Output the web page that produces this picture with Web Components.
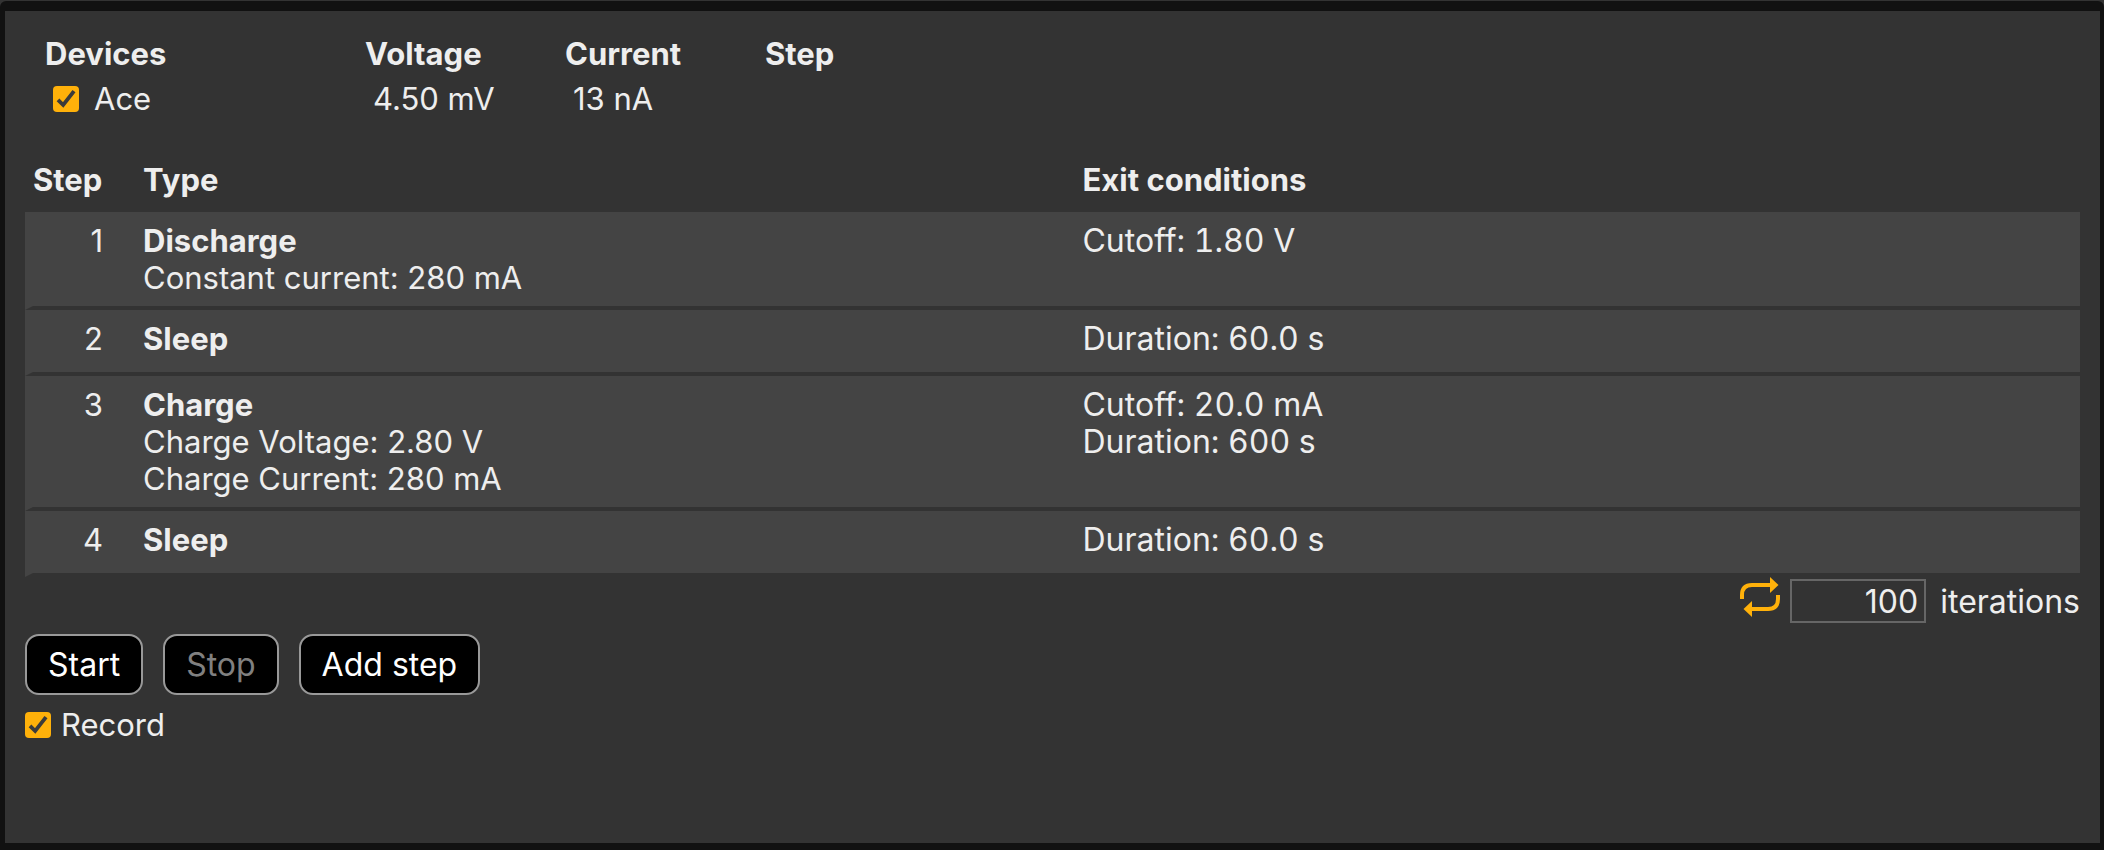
<!DOCTYPE html>
<html lang="en">
<head>
<meta charset="utf-8">
<meta name="viewport" content="width=device-width, initial-scale=1">
<title>Source sequence</title>
<style>
  html, body {
    height: 100%;
    margin: 0;
  }
  body {
    background: #333;
    color: #eee;
    font: 31px/37px Inter, "Liberation Sans", sans-serif;
    --control-size: 32px;
  }
</style>
</head>
<body>
<sequence-panel>
  <device-list slot="devices"></device-list>
  <step-table slot="steps"></step-table>
  <loop-count slot="loop" value="100"></loop-count>
  <push-button slot="actions">Start</push-button>
  <push-button slot="actions" disabled>Stop</push-button>
  <push-button slot="actions">Add step</push-button>
  <check-box slot="record" checked>Record</check-box>
</sequence-panel>

<script>
class SequencePanel extends HTMLElement {
  connectedCallback() {
    if (this.shadowRoot) return;
    this.attachShadow({ mode: "open" });
    this.shadowRoot.innerHTML = `
      <style>
        :host {
          display: flex;
          box-sizing: border-box;
          min-height: 100%;
          padding-top: 1px;
        }
        main {
          flex: 1;
          box-sizing: border-box;
          border: solid #111;
          border-width: 10px 4px 7px 5px;
          border-radius: 6px 6px 0 0;
          padding: 24px 20px;
        }
        .steps {
          margin-top: 44px;
        }
        .loop {
          display: flex;
          justify-content: flex-end;
        }
        .actions {
          display: flex;
          flex-wrap: wrap;
          gap: 20px;
          margin: 9px 0 11px;
        }
      </style>
      <main>
        <slot name="devices"></slot>
        <div class="steps"><slot name="steps"></slot></div>
        <div class="loop"><slot name="loop"></slot></div>
        <div class="actions"><slot name="actions"></slot></div>
        <slot name="record"></slot>
      </main>
    `;
  }
}

class CheckBox extends HTMLElement {
  connectedCallback() {
    if (this.shadowRoot) return;
    this.attachShadow({ mode: "open" });
    this.shadowRoot.innerHTML = `
      <style>
        :host {
          display: block;
        }
        label {
          display: inline-flex;
          align-items: center;
          gap: var(--check-gap, 10px);
          vertical-align: top;
        }
        .box {
          display: grid;
          flex: none;
        }
        input, svg {
          grid-area: 1 / 1;
          width: 26px;
          height: 26px;
          margin: 0;
        }
        input {
          appearance: none;
          background: #555;
          border-radius: 4px;
        }
        input:checked {
          background: #ffb10a;
        }
        svg {
          pointer-events: none;
          visibility: hidden;
        }
        input:checked + svg {
          visibility: visible;
        }
      </style>
      <label>
        <span class="box">
          <input type="checkbox" ${this.hasAttribute("checked") ? "checked" : ""}>
          <svg viewBox="0 0 26 26" aria-hidden="true">
            <path d="M5 13.8l5.2 5.2L21 5.2" fill="none" stroke="#3b3b3b" stroke-width="3.8"/>
          </svg>
        </span>
        <slot></slot>
      </label>
    `;
  }
}

class PushButton extends HTMLElement {
  connectedCallback() {
    if (this.shadowRoot) return;
    this.attachShadow({ mode: "open" });
    this.shadowRoot.innerHTML = `
      <style>
        :host {
          display: block;
        }
        button {
          display: block;
          padding: 10px 21px;
          font: inherit;
          font-size: var(--control-size);
          color: #fff;
          background: #000;
          border: 2px solid #999;
          border-radius: 14px;
        }
        button:disabled {
          color: #808080;
        }
      </style>
      <button type="button" ${this.hasAttribute("disabled") ? "disabled" : ""}><slot></slot></button>
    `;
  }
}

class DeviceList extends HTMLElement {
  devices = [{ name: "Ace", voltage: "4.50 mV", current: "13 nA", step: "" }];

  connectedCallback() {
    if (this.shadowRoot) return;
    this.attachShadow({ mode: "open" });
    this.shadowRoot.innerHTML = `
      <style>
        :host {
          display: block;
          --check-gap: 15px;
        }
        table {
          table-layout: fixed;
          border-spacing: 0;
          width: 920px;
          max-width: 100%;
          margin-left: 20px;
        }
        th, td {
          text-align: left;
          padding: 0;
        }
        th {
          padding-bottom: 8px;
        }
        th:first-child {
          width: 320px;
        }
        td {
          padding-left: 8px;
        }
      </style>
      <table>
        <thead>
          <tr><th>Devices</th><th>Voltage</th><th>Current</th><th>Step</th></tr>
        </thead>
        <tbody>
          ${this.devices.map((d) => `
            <tr>
              <td><check-box checked>${d.name}</check-box></td>
              <td>${d.voltage}</td>
              <td>${d.current}</td>
              <td>${d.step}</td>
            </tr>
          `).join("")}
        </tbody>
      </table>
    `;
  }
}

class StepTable extends HTMLElement {
  steps = [
    { type: "Discharge", settings: ["Constant current: 280 mA"], exit: ["Cutoff: 1.80 V"] },
    { type: "Sleep", settings: [], exit: ["Duration: 60.0 s"] },
    {
      type: "Charge",
      settings: ["Charge Voltage: 2.80 V", "Charge Current: 280 mA"],
      exit: ["Cutoff: 20.0 mA", "Duration: 600 s"],
    },
    { type: "Sleep", settings: [], exit: ["Duration: 60.0 s"] },
  ];

  connectedCallback() {
    if (this.shadowRoot) return;
    this.attachShadow({ mode: "open" });
    this.shadowRoot.innerHTML = `
      <style>
        :host {
          display: block;
        }
        table {
          table-layout: fixed;
          border-spacing: 0;
          width: 100%;
        }
        .num {
          width: 118px;
        }
        .tools {
          width: 58px;
        }
        th {
          text-align: left;
          padding: 0 0 14px;
        }
        th:first-child {
          padding-left: 8px;
        }
        td {
          height: 42px;
          padding: 10px 0;
          vertical-align: top;
          background: #444;
          border-bottom: 4px solid #333;
        }
        td:first-child {
          text-align: right;
          padding-right: 40px;
          border-left: 8px solid #444;
          background-clip: padding-box;
        }
        .exit {
          font-size: var(--control-size);
          font-variant-numeric: tabular-nums;
        }
      </style>
      <table>
        <colgroup><col class="num"><col><col><col class="tools"></colgroup>
        <thead>
          <tr><th>Step</th><th>Type</th><th colspan="2">Exit conditions</th></tr>
        </thead>
        <tbody>
          ${this.steps.map((step, i) => `
            <tr>
              <td>${i + 1}</td>
              <td><b>${step.type}</b>${step.settings.map((s) => `<div>${s}</div>`).join("")}</td>
              <td class="exit" colspan="2">${step.exit.map((e) => `<div>${e}</div>`).join("")}</td>
            </tr>
          `).join("")}
        </tbody>
      </table>
    `;
  }
}

class LoopCount extends HTMLElement {
  connectedCallback() {
    if (this.shadowRoot) return;
    this.attachShadow({ mode: "open" });
    this.shadowRoot.innerHTML = `
      <style>
        :host {
          display: flex;
          align-items: center;
          font-size: var(--control-size);
        }
        svg {
          width: 40px;
          height: 40px;
          margin: 0 10px 8px 0;
        }
        input {
          box-sizing: border-box;
          width: 136px;
          height: 44px;
          margin: 0 14px 0 0;
          padding: 0 6px;
          font: inherit;
          color: inherit;
          text-align: right;
          background: none;
          border: 2px solid #666;
        }
      </style>
      <svg viewBox="0 0 40 40" aria-hidden="true">
        <path d="M2 22v-4q0-10 10-10h19M38 18v4q0 10-10 10H9" fill="none" stroke="#ffb10a" stroke-width="4"/>
        <path d="M30 0l8.5 8-8.5 8zM12 24l-8.5 8 8.5 8z" fill="#ffb10a"/>
      </svg>
      <input id="count" type="text" inputmode="numeric" value="${this.getAttribute("value")}">
      <label for="count">iterations</label>
    `;
  }
}

customElements.define("check-box", CheckBox);
customElements.define("push-button", PushButton);
customElements.define("device-list", DeviceList);
customElements.define("step-table", StepTable);
customElements.define("loop-count", LoopCount);
customElements.define("sequence-panel", SequencePanel);
</script>
</body>
</html>
